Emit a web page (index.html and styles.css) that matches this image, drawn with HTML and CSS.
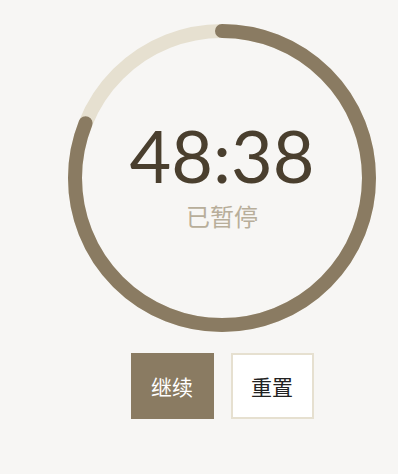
FILE: index.html
```html
<!DOCTYPE html>
<html lang="zh-CN">
<head>
  <meta charset="UTF-8">
  <meta name="viewport" content="width=device-width, initial-scale=1.0">
  <title>计时器</title>
  <link rel="stylesheet" href="styles.css">
</head>
<body>

<div class="timer">
  <!-- 进度环 -->
  <div class="ring">
    <svg class="ring-svg" viewBox="0 0 308 308" width="308" height="308">
      <circle class="ring-track" cx="154" cy="154" r="147"></circle>
      <circle class="ring-progress" cx="154" cy="154" r="147"
              stroke-dasharray="748.6 923.6" transform="rotate(-90 154 154)"></circle>
    </svg>
    <div class="ring-text">
      <div class="time">48:38</div>
      <div class="status">已暂停</div>
    </div>
  </div>

  <!-- 控制按钮 -->
  <div class="controls">
    <button class="btn btn-primary" type="button">继续</button>
    <button class="btn btn-outline" type="button">重置</button>
  </div>
</div>

</body>
</html>
```

FILE: styles.css
```css
html, body {
  margin: 0;
  padding: 0;
}

body {
  background-color: #f7f6f4;
  font-family: "Noto Sans CJK SC", sans-serif;
}

.timer {
  padding-top: 24px;
  padding-left: 46px;
  display: flex;
  flex-direction: column;
  align-items: center;
}

.ring {
  position: relative;
  width: 308px;
  height: 308px;
}

.ring-svg {
  display: block;
}

.ring-track {
  fill: none;
  stroke: #e6e0d0;
  stroke-width: 14;
}

.ring-progress {
  fill: none;
  stroke: #8a7b62;
  stroke-width: 14;
  stroke-linecap: round;
}

.ring-text {
  position: absolute;
  top: 0;
  left: 0;
  right: 0;
  bottom: 0;
  display: flex;
  flex-direction: column;
  align-items: center;
  justify-content: center;
}

.time {
  font-family: "Lato", sans-serif;
  font-weight: 400;
  font-size: 72px;
  line-height: 1;
  color: #4a3f2e;
  margin-top: -10px;
}

.status {
  margin-top: 13px;
  font-size: 24px;
  line-height: 1;
  color: #b8ae9a;
}

.controls {
  display: flex;
  gap: 17px;
  margin-top: 21px;
}

.btn {
  width: 83px;
  height: 66px;
  font-family: "Noto Sans CJK SC", sans-serif;
  font-size: 21px;
  font-weight: 400;
  border-radius: 0;
  cursor: pointer;
  padding: 0;
}

.btn-primary {
  background-color: #8a7b62;
  color: #ffffff;
  border: none;
}

.btn-outline {
  background-color: #ffffff;
  color: #222222;
  border: 2px solid #e6e0d0;
}
```
